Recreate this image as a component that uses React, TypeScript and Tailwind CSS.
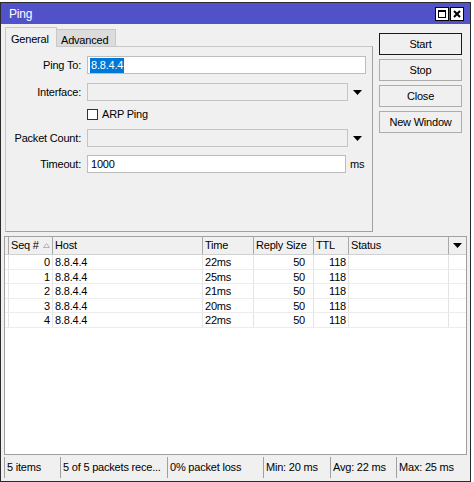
import React from "react";

const rows = [
  { seq: 0, host: "8.8.4.4", time: "22ms", size: 50, ttl: 118 },
  { seq: 1, host: "8.8.4.4", time: "25ms", size: 50, ttl: 118 },
  { seq: 2, host: "8.8.4.4", time: "21ms", size: 50, ttl: 118 },
  { seq: 3, host: "8.8.4.4", time: "20ms", size: 50, ttl: 118 },
  { seq: 4, host: "8.8.4.4", time: "22ms", size: 50, ttl: 118 },
];

function DownArrow() {
  return (
    <svg width="9" height="5" viewBox="0 0 9 5">
      <path d="M0 0 H9 L4.5 5 Z" fill="#000" />
    </svg>
  );
}

function Field({
  label,
  width,
  disabled,
  value,
  selected,
  suffix,
}: {
  label: string;
  width: string;
  disabled?: boolean;
  value?: string;
  selected?: boolean;
  suffix?: React.ReactNode;
}) {
  return (
    <div className="flex items-center h-[18px]">
      <div className="w-[76px] text-right pr-[1px]">{label}</div>
      <div
        className={`${width} ml-[5px] h-[18px] border flex items-center px-[2px] ${
          disabled ? "bg-[#f0f0f0] border-[#c4c4c4]" : "bg-white border-[#bdbdbd]"
        }`}
      >
        {selected ? (
          <span className="bg-[#0078d7] text-white px-[1px] leading-[15px]">{value}</span>
        ) : (
          <span className="px-[1px]">{value}</span>
        )}
      </div>
      {suffix}
    </div>
  );
}

const cols = [
  { w: "w-[4px]", label: "" },
  { w: "w-[44px]", label: "Seq #" },
  { w: "w-[150px]", label: "Host" },
  { w: "w-[51px]", label: "Time" },
  { w: "w-[60px]", label: "Reply Size" },
  { w: "w-[35px]", label: "TTL" },
  { w: "w-[100px]", label: "Status" },
];

export default function App() {
  return (
    <div
      className="w-[474px] h-[482px] bg-white pt-[2px] text-[11px] text-black tracking-[-0.2px]"
      style={{ fontFamily: '"Liberation Sans", Arial, sans-serif' }}
    >
      <div className="w-[471px] h-[480px] border border-[#2b2b2b] bg-[#f0f0f0] flex flex-col">
        {/* title bar */}
        <div className="h-[21px] bg-[#5151c9] flex items-center pl-[8px] pr-[6px]">
          <span className="text-white text-[12px]">Ping</span>
          <div className="ml-auto flex gap-[1px]">
            <div className="w-[14px] h-[14px] bg-white border border-black flex items-center justify-center">
              <div className="w-[8px] h-[8px] border border-black border-t-2" />
            </div>
            <div className="w-[14px] h-[14px] bg-white border border-black flex items-center justify-center">
              <svg width="8" height="8" viewBox="0 0 8 8">
                <path d="M1 1 L7 7 M7 1 L1 7" stroke="#000" strokeWidth="2" />
              </svg>
            </div>
          </div>
        </div>

        {/* upper area */}
        <div className="flex pl-[4px] pt-[2px] h-[208px]">
          <div className="w-[368px] flex flex-col">
            <div className="flex items-end h-[20px]">
              <div className="h-[20px] w-[52px] border border-b-0 border-[#c8c8c8] bg-[#f0f0f0] pl-[5px] pt-[3px] relative z-10 -mb-[1px]">
                General
              </div>
              <div className="h-[17px] w-[59px] border border-l-0 border-b-0 border-[#c8c8c8] bg-[#dcdcdc] pl-[4px] pt-[2px]">
                Advanced
              </div>
            </div>
            <div className="flex-1 border border-[#c8c8c8] border-r-[#a0a0a0] border-b-[#a0a0a0] flex flex-col">
              <div className="mt-[9px]">
                <Field label="Ping To:" width="w-[279px]" value="8.8.4.4" selected />
              </div>
              <div className="mt-[9px]">
                <Field
                  label="Interface:"
                  width="w-[261px]"
                  disabled
                  suffix={
                    <div className="ml-[5px] flex items-center">
                      <DownArrow />
                    </div>
                  }
                />
              </div>
              <div className="mt-[4px] h-[18px] flex items-center pl-[81px]">
                <div className="w-[11px] h-[11px] bg-white border border-[#333]" />
                <span className="ml-[4px]">ARP Ping</span>
              </div>
              <div className="mt-[6px]">
                <Field
                  label="Packet Count:"
                  width="w-[261px]"
                  disabled
                  suffix={
                    <div className="ml-[5px] flex items-center">
                      <DownArrow />
                    </div>
                  }
                />
              </div>
              <div className="mt-[8px]">
                <Field
                  label="Timeout:"
                  width="w-[259px]"
                  value="1000"
                  suffix={<span className="ml-[4px]">ms</span>}
                />
              </div>
            </div>
          </div>

          <div className="ml-[6px] pt-[7px] flex flex-col gap-[4px]">
            <button className="w-[83px] h-[22px] border border-[#1a1a1a] bg-[#f0f0f0]">Start</button>
            <button className="w-[83px] h-[22px] border border-[#adadad] bg-[#f0f0f0]">Stop</button>
            <button className="w-[83px] h-[22px] border border-[#adadad] bg-[#f0f0f0]">Close</button>
            <button className="w-[83px] h-[22px] border border-[#adadad] bg-[#f0f0f0]">New Window</button>
          </div>
        </div>

        {/* table */}
        <div className="mx-[3px] mt-[4px] flex-1 border border-[#a0a0a0] bg-white flex flex-col overflow-hidden">
          <div className="flex h-[18px] bg-[#f0f0f0] border-b border-[#d0d0d0]">
            {cols.map((c, i) => (
              <div
                key={i}
                className={`${c.w} shrink-0 border-r border-[#a8a8a8] pl-[2px] flex items-center`}
              >
                {c.label}
                {c.label === "Seq #" && (
                  <svg className="ml-[4px]" width="7" height="5" viewBox="0 0 7 5">
                    <path d="M0.5 4.5 L3.5 0.5 L6.5 4.5 Z" fill="none" stroke="#b5b5b5" />
                  </svg>
                )}
              </div>
            ))}
            <div className="w-[17px] shrink-0 flex items-center justify-center">
              <DownArrow />
            </div>
          </div>
          {rows.map((r) => (
            <div key={r.seq} className="flex h-[14.5px] border-b border-[#ececec] leading-[14px]">
              <div className="w-[4px] shrink-0 border-r border-[#e4e4e4]" />
              <div className="w-[44px] shrink-0 border-r border-[#e4e4e4] text-right pr-[2px]">{r.seq}</div>
              <div className="w-[150px] shrink-0 border-r border-[#e4e4e4] pl-[2px]">{r.host}</div>
              <div className="w-[51px] shrink-0 border-r border-[#e4e4e4] pl-[2px]">{r.time}</div>
              <div className="w-[60px] shrink-0 border-r border-[#e4e4e4] text-right pr-[8px]">{r.size}</div>
              <div className="w-[35px] shrink-0 border-r border-[#e4e4e4] text-right pr-[2px]">{r.ttl}</div>
              <div className="w-[100px] shrink-0 border-r border-[#e4e4e4]" />
              <div className="w-[17px] shrink-0" />
            </div>
          ))}
        </div>

        {/* status bar */}
        <div className="mx-[3px] mt-[2px] mb-[3px] h-[21px] flex">
          {[
            { w: "w-[56px]", t: "5 items" },
            { w: "w-[107px]", t: "5 of 5 packets rece..." },
            { w: "w-[96px]", t: "0% packet loss" },
            { w: "w-[67px]", t: "Min: 20 ms" },
            { w: "w-[66px]", t: "Avg: 22 ms" },
            { w: "w-[71px]", t: "Max: 25 ms" },
          ].map((s, i) => (
            <div
              key={i}
              className={`${s.w} shrink-0 border-l border-[#a0a0a0] flex items-center pl-[2px] whitespace-nowrap overflow-hidden`}
            >
              {s.t}
            </div>
          ))}
        </div>
      </div>
    </div>
  );
}
